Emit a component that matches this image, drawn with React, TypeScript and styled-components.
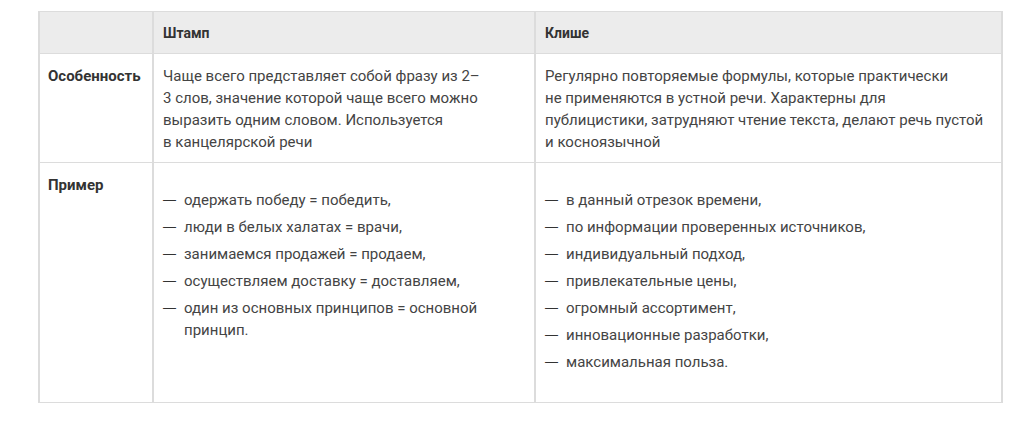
import * as React from "react";
import styled, { createGlobalStyle } from "styled-components";

const GlobalStyle = createGlobalStyle`
    html, body {
        margin: 0;
        padding: 0;
        background: #ffffff;
    }
    body {
        font-family: Roboto, "Liberation Sans", Arial, sans-serif;
    }
`;

const Page = styled.div`
    padding: 11px 0 0 38px;
`;

const Table = styled.table`
    width: 963px;
    table-layout: fixed;
    border-collapse: collapse;
    font-size: 15px;
    line-height: 22px;
    color: #444;
`;

const HeadCell = styled.th`
    background: #ececec;
    color: #333;
    font-size: 14px;
    font-weight: 700;
    text-align: left;
    padding: 10px 9px 9px;
    border: 1px solid #dcdcdc;
    border-left-width: 2px;
    border-right-width: 2px;
`;

const Cell = styled.td<{ $label?: boolean }>`
    vertical-align: top;
    padding: 11px ${(p) => (p.$label ? "8px" : "9px")} 9px;
    border: 1px solid #dcdcdc;
    border-left-width: 2px;
    border-right-width: 2px;
    font-weight: ${(p) => (p.$label ? 700 : 400)};
    color: ${(p) => (p.$label ? "#333" : "#444")};
`;

const DashList = styled.ul`
    list-style: none;
    margin: 15px 0 20px;
    padding: 0;
`;

const Item = styled.li`
    display: flex;
    margin-bottom: 5px;

    &:last-child {
        margin-bottom: 0;
    }
`;

const Dash = styled.span`
    flex: 0 0 21px;
    font-family: "Liberation Sans", Arial, sans-serif;
    font-size: 13px;
    line-height: 22px;
    color: #333;
`;

const stamps = [
    "одержать победу = победить,",
    "люди в белых халатах = врачи,",
    "занимаемся продажей = продаем,",
    "осуществляем доставку = доставляем,",
    "один из основных принципов = основной принцип.",
];

const cliches = [
    "в данный отрезок времени,",
    "по информации проверенных источников,",
    "индивидуальный подход,",
    "привлекательные цены,",
    "огромный ассортимент,",
    "инновационные разработки,",
    "максимальная польза.",
];

const Examples = (props: { items: string[] }) => (
    <DashList>
        {props.items.map((text) => (
            <Item key={text}>
                <Dash>—</Dash>
                <span>{text}</span>
            </Item>
        ))}
    </DashList>
);

export default function App() {
    return (
        <Page>
            <GlobalStyle />
            <Table>
                <colgroup>
                    <col style={{ width: 114 }} />
                    <col style={{ width: 382 }} />
                    <col style={{ width: 467 }} />
                </colgroup>
                <thead>
                    <tr>
                        <HeadCell />
                        <HeadCell>Штамп</HeadCell>
                        <HeadCell>Клише</HeadCell>
                    </tr>
                </thead>
                <tbody>
                    <tr>
                        <Cell $label>Особенность</Cell>
                        <Cell>
                            Чаще всего представляет собой фразу из 2–<br />
                            3 слов, значение которой чаще всего можно<br />
                            выразить одним словом. Используется<br />
                            в канцелярской речи
                        </Cell>
                        <Cell>
                            Регулярно повторяемые формулы, которые практически<br />
                            не применяются в устной речи. Характерны для<br />
                            публицистики, затрудняют чтение текста, делают речь пустой<br />
                            и косноязычной
                        </Cell>
                    </tr>
                    <tr>
                        <Cell $label>Пример</Cell>
                        <Cell>
                            <Examples items={stamps} />
                        </Cell>
                        <Cell>
                            <Examples items={cliches} />
                        </Cell>
                    </tr>
                </tbody>
            </Table>
        </Page>
    );
}
